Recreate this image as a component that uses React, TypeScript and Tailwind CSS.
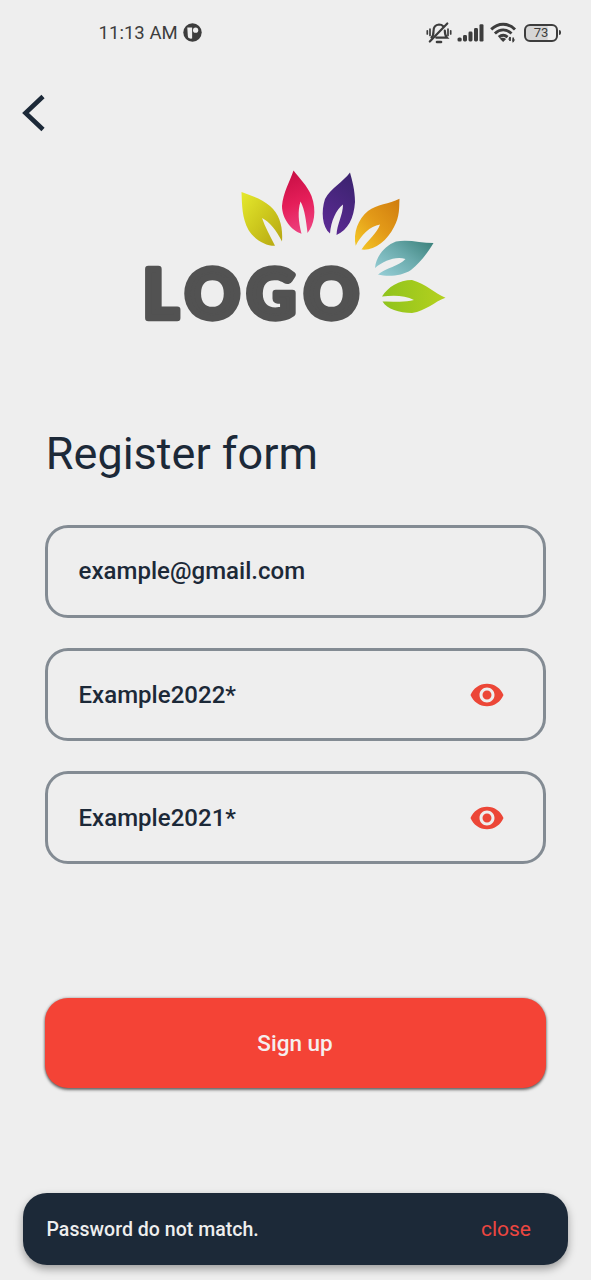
import React from "react";

function StatusBar() {
  return (
    <header className="flex h-[66px] items-center justify-between pr-[30px] pl-[98.500px] text-[#3d3d3d]">
      <div className="flex items-center gap-[5px]">
        <span className="text-[18.500px] leading-6 tracking-[0.050px]">11:13 AM</span>
        <svg className="-mt-[2px]" width="19" height="19" viewBox="0 0 19 19">
          <circle cx="9.500" cy="9.500" r="9.200" fill="#3d3d3d" />
          <path d="M4.300 4.500h4.800v11c-2.200.6-3.800-.6-4.300-2.600Z" fill="#eee" />
          <circle cx="12.600" cy="7.200" r="2.600" fill="#eee" />
        </svg>
      </div>
      <div className="flex items-center">
        <svg width="26" height="24" viewBox="0 0 26 24" fill="none" stroke="#3d3d3d" strokeWidth="2.200" strokeLinecap="round">
          <path d="M5.500 16.500c1.700-1.600 2-3.400 2-6.300 0-4.200 2-6.500 5.500-6.700 2 0 3.200.6 4.200 1.700M18.800 9.500c0 3.200.3 5.200 2.200 7.200H10.300" />
          <path d="M3.800 20.500 21.300 2.500" strokeWidth="2.200" />
          <path d="M11 21h4" strokeWidth="2.600" />
          <path d="M4 8.200v6.300M1.300 9.800v3.200M22 8.200v6.300M24.700 9.800v3.200" strokeWidth="1.700" />
        </svg>
        <svg className="ml-[5px]" width="27" height="20" viewBox="0 0 27 20" fill="#3d3d3d">
          <rect x="0.500" y="14.500" width="4.200" height="4" rx="1.600" />
          <rect x="6" y="12" width="4" height="6.500" rx="1.400" />
          <rect x="11.500" y="8.500" width="4" height="10" rx="1.400" />
          <rect x="17" y="5" width="4" height="13.500" rx="1.400" />
          <rect x="22.500" y="1.200" width="4" height="17.300" rx="1.200" />
        </svg>
        <svg className="ml-[6px]" width="27" height="22" viewBox="0 0 27 22" fill="none" stroke="#3d3d3d" strokeWidth="2.900">
          <path d="M1.200 7.400c7-6.900 17-6.900 23.800 0" />
          <path d="M4.900 11.500c5-4.800 11.700-4.800 16.600 0" />
          <path d="M8.800 15.200c2.800-2.500 6-2.500 8.800 0" />
          <path d="m9.600 16.600 3.500 3.500 3-3.200c-2-1.500-4.500-1.600-6.500-.3Z" fill="#3d3d3d" stroke="none" />
          <path d="M20 15v4M23.200 15.500v4" strokeWidth="1.700" />
          <path d="m18 17.500 2-3 .8 3ZM22.400 17.500h2.800l-2.500 3.400Z" fill="#3d3d3d" stroke="none" />
        </svg>
        <div className="-mt-px ml-[7px] flex h-[18px] w-[34px] items-center justify-center rounded-[6px] border-2 border-[#3d3d3d] bg-linear-to-r from-[#d6d6d6] from-70% to-[#eeeeee] to-75% text-[13px] leading-none">
          73
        </div>
        <span className="-mt-px ml-px h-[5px] w-[2px] rounded-r bg-[#3d3d3d]" />
      </div>
    </header>
  );
}

function Logo() {
  return (
    <svg className="mx-auto block" width="331" height="190" viewBox="130 160 331 190" role="img" aria-label="Logo">
      <defs>
        <linearGradient id="yellow" x1="0" y1="0" x2="1" y2="1">
          <stop stopColor="#e5e92e" />
          <stop offset="0.5" stopColor="#cdc81d" />
          <stop offset="1" stopColor="#b5a512" />
        </linearGradient>
        <linearGradient id="pink" x1="0.4" y1="0" x2="0.6" y2="1">
          <stop stopColor="#c80f45" />
          <stop offset="0.5" stopColor="#e51e59" />
          <stop offset="1" stopColor="#ee4381" />
        </linearGradient>
        <linearGradient id="purple" x1="0.7" y1="0" x2="0.3" y2="1">
          <stop stopColor="#3c2370" />
          <stop offset="1" stopColor="#5b2a93" />
        </linearGradient>
        <linearGradient id="orange" x1="1" y1="0" x2="0" y2="1">
          <stop stopColor="#cf7c0e" />
          <stop offset="0.5" stopColor="#e39a18" />
          <stop offset="1" stopColor="#f5cb28" />
        </linearGradient>
        <linearGradient id="teal" x1="1" y1="0" x2="0" y2="0.8">
          <stop stopColor="#397f79" />
          <stop offset="0.5" stopColor="#6aaaac" />
          <stop offset="1" stopColor="#92cbd2" />
        </linearGradient>
        <linearGradient id="green" x1="1" y1="0.5" x2="0" y2="0.5">
          <stop stopColor="#b5d11e" />
          <stop offset="1" stopColor="#8fc31d" />
        </linearGradient>
      </defs>
      <path fill="url(#yellow)" d="M241.500 192C252 196 262 199 270 206C280 215 283 227 282 241.500C276 230 270 222 262 218C265 227 270 236 275 245.800C265 246 254 239 248.500 230C242 218 242 205 241.500 192Z" />
      <path fill="url(#pink)" d="M293.500 170.500C299 178 307 185 311.500 196C317 211 314 225 307.500 233C306 221 305 210 300.500 201.500C297.500 211 298.500 222 301.500 233.700C292 231 282 219 282 206C283 193 290 181 293.500 170.500Z" />
      <path fill="url(#purple)" d="M350 172.500C352 180 355 190 355 202C354 218 348 230 336.500 235C337 224 343 215 343 204.500C336 210 331 221 330 233.500C322 227 321 211 325 199C331 188 343 182 350 172.500Z" />
      <path fill="url(#orange)" d="M399.500 198.700C399 207 400 216 394 227C387 241 374 251 361.500 249.500C368 240 377 233 380 224.500C370 226 361 235 355.700 245.800C353 233 358 219 368 211C377 204 389 204 399.500 198.700Z" />
      <path fill="url(#teal)" d="M433.500 243C428 252 421 262 411 270C402 276 388 277 378 274.500C386 268 399 266 405.500 259C395 256 384 261 375 268C376 257 384 246 396 241.500C408 239 421 243 433.500 243Z" />
      <path fill="url(#green)" d="M445.500 297.800C434 302 426 311 412 313C399 313 387 309 382.500 301.500C393 301 404 303 414 300C405 295 393 295 382 296.500C388 287 399 280 412 280C426 284 434 293 445.500 297.800Z" />
      <text
        x="143.200 185.300 247 304.300"
        y="318.300"
        fill="#525252"
        stroke="#525252"
        strokeWidth="6.500"
        strokeLinejoin="round"
        className="font-[Lato] text-[67px] font-black"
      >
        LOGO
      </text>
    </svg>
  );
}

function EyeIcon() {
  return (
    <svg width="36" height="36" viewBox="0 0 24 24" fill="#ec4637">
      <path d="M12 4.500C7 4.500 2.730 7.610 1 12c1.730 4.390 6 7.500 11 7.500s9.270-3.110 11-7.500c-1.730-4.390-6-7.500-11-7.500zM12 17c-2.760 0-5-2.240-5-5s2.240-5 5-5 5 2.240 5 5-2.240 5-5 5zm0-8c-1.660 0-3 1.340-3 3s1.340 3 3 3 3-1.340 3-3-1.340-3-3-3z" />
    </svg>
  );
}

function Field({ value, secret = false }: { value: string; secret?: boolean }) {
  return (
    <div className="flex h-[93px] items-center justify-between rounded-[23px] border-3 border-[#838b93] pr-[38px] pl-[30.500px]">
      <span className="text-[24px] leading-7 font-medium tracking-[0.030px]">{value}</span>
      {secret && (
        <button type="button" aria-label="Toggle visibility">
          <EyeIcon />
        </button>
      )}
    </div>
  );
}

export default function App() {
  return (
    <div className="flex h-[1280px] w-[591px] flex-col overflow-hidden bg-[#eeeeee] font-[Roboto,sans-serif] text-[#1c2938]">
      <StatusBar />
      <button type="button" aria-label="Back" className="mt-[28px] ml-[21px] w-[26px]">
        <svg width="26" height="38" viewBox="0 0 26 38" fill="none" stroke="#1c2938" strokeWidth="4.600">
          <path d="M22 2.500 4.500 19 22 35.500" />
        </svg>
      </button>
      <div className="mt-[28px]">
        <Logo />
      </div>
      <main className="mt-[74px] flex flex-col px-[45px]">
        <h1 className="h-[60px] pl-[0.800px] text-[45px] leading-[60px]">Register form</h1>
        <div className="mt-[40.900px] flex flex-col gap-[30.300px]">
          <Field value="example@gmail.com" />
          <Field value="Example2022*" secret />
          <Field value="Example2021*" secret />
        </div>
        <button
          type="button"
          className="mt-[133.500px] h-[90px] rounded-[23px] bg-[#f44336] pt-[2px] pr-px text-[22.500px] font-medium text-[#f5eeee] shadow-[0_2px_3px_rgba(0,0,0,0.5),0_0_3px_rgba(0,0,0,0.35)]"
        >
          Sign up
        </button>
      </main>
      <div className="mx-[23px] mt-[105px] flex h-[72px] shrink-0 items-center justify-between rounded-[24px] bg-[#1c2938] pt-px pr-[37px] pl-[23.500px] shadow-[0_4px_8px_rgba(0,0,0,0.35)]">
        <span className="pt-px text-[19.500px] font-medium tracking-[0.030px] text-[#eeeeee]">Password do not match.</span>
        <button type="button" className="text-[21px] text-[#ec4640]">
          close
        </button>
      </div>
    </div>
  );
}
